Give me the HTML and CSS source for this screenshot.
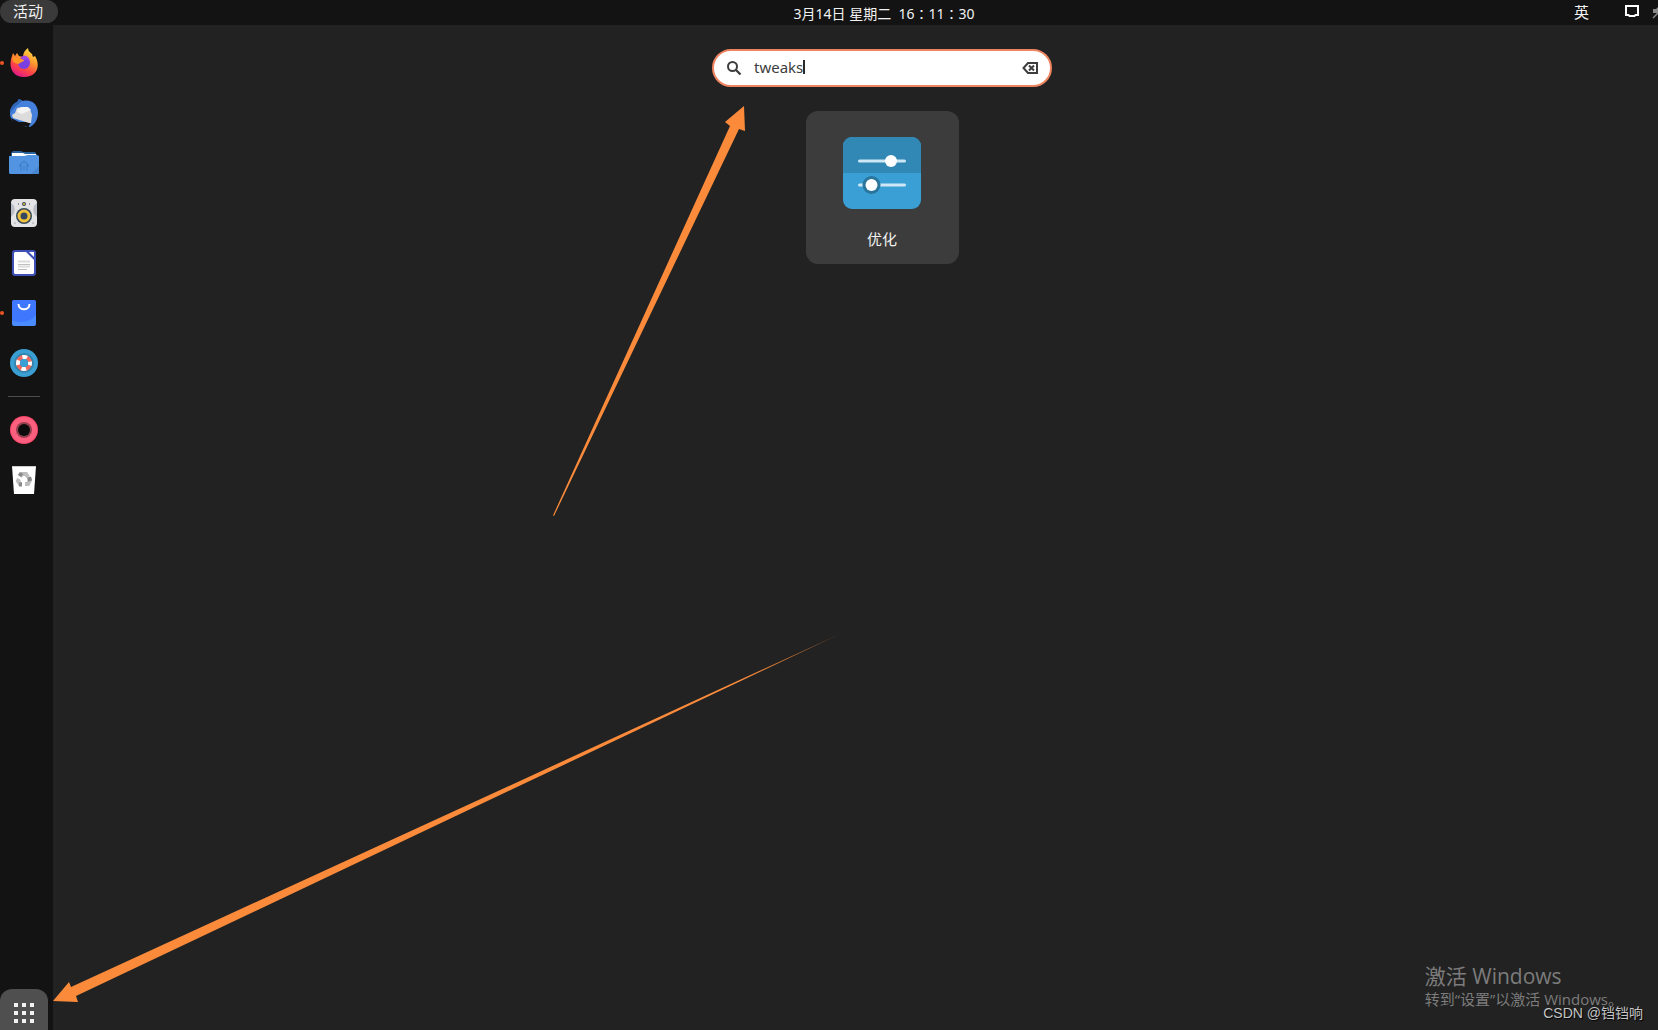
FILE: index.html
```html
<!DOCTYPE html>
<html lang="zh-CN">
<head>
    <meta charset="UTF-8">
    <meta name="viewport" content="width=device-width, initial-scale=1.0">
    <title>活动</title>
    <link rel="stylesheet" href="styles.css">
</head>
<body>
    <header class="topbar">
        <button class="activities">活动</button>
        <time class="clock">3月14日 星期二&nbsp; 16∶11∶30</time>
        <div class="tray">
            <button class="tray-btn">英</button>
            <button class="tray-btn" aria-label="Display">
                <svg width="16" height="16" viewBox="0 0 16 16">
                    <path d="M2 2h12v9h-2.500l-1 1h-5l-1-1H2z" fill="none" stroke="#fff" stroke-width="2"/>
                </svg>
            </button>
            <button class="tray-btn tray-last" aria-label="Volume">
                <svg width="16" height="16" viewBox="0 0 16 16">
                    <path d="M1 5h3l3-3v9L4 9H1z" fill="#888"/>
                    <path d="M1 14L9 6" stroke="#888" stroke-width="1.500"/>
                </svg>
            </button>
        </div>
    </header>

    <div class="desktop">
        <nav class="dock">
            <button class="dock-item running" aria-label="Firefox">
                <svg width="30" height="30" viewBox="0 0 30 30">
                    <defs>
                        <linearGradient id="fox" x1="0.8" y1="0" x2="0.3" y2="1">
                            <stop offset="0" stop-color="#ffe14a"/>
                            <stop offset="0.4" stop-color="#ff9a2e"/>
                            <stop offset="0.7" stop-color="#ff4646"/>
                            <stop offset="1" stop-color="#e0188a"/>
                        </linearGradient>
                    </defs>
                    <path d="M3 8l1-3 2 3 2-3 2 3 4 1c0-4 2-7 5-9 0 3 2 4 4 6l1 3 2-1c6 10 2 21-11 21C3 29-1 18 3 8z" fill="url(#fox)"/>
                    <circle cx="15" cy="15" r="6" fill="#7a3fe0"/>
                    <path d="M12 9c4-3 9 0 9 5-2-3-5-3-7-2z" fill="#a446e8"/>
                    <path d="M3 9l7 1 5 2c0 2-4 2-5 4-3-1-5-1-6-3z" fill="#ff9624"/>
                </svg>
            </button>
            <button class="dock-item" aria-label="Thunderbird">
                <svg width="30" height="30" viewBox="0 0 30 30">
                    <path d="M8 4l2-3 4 2c9-2 15 4 15 12 0 7-4 12-8 14l-9-1C4 26 1 21 1 15 1 10 4 6 8 4z" fill="#4580dc"/>
                    <path d="M8 4l2-3 3 2-7 6-5 6c0-5 3-9 7-11z" fill="#2f66b8"/>
                    <path d="M2 20l8 4 12 0-3 6-2-2-2 1-6-1C5 26 3 23 2 20z" fill="#131313"/>
                    <path d="M3 17l3-2 2-5 5-1h5l3 2 2 6-1 8-2 0L4 20z" fill="#dcdcdc"/>
                    <path d="M8 14l5 2 9-4-3-3h-6l-4 2z" fill="#f4f4f4"/>
                </svg>
            </button>
            <button class="dock-item" aria-label="文件">
                <svg width="30" height="30" viewBox="0 0 30 30">
                    <path d="M2 5l2-2h8l2 1h12l2 3v5H2z" fill="#28619c"/>
                    <path d="M3 5h11l2 1h11v4H3z" fill="#fff"/>
                    <path d="M1 8h14l4-1h9l2 1v17l-1 1H1l-1-1V8z" fill="#5294e2"/>
                    <path d="M30 18v7l-1 1h-7z" fill="#4786ce"/>
                    <path d="M10 18l5-5 5 5M12 17v5h1m4 0h1v-5M15 18v4" fill="none" stroke="#3f7fc6" stroke-width="1.200"/>
                </svg>
            </button>
            <button class="dock-item" aria-label="Rhythmbox">
                <svg width="30" height="30" viewBox="0 0 30 30">
                    <rect x="2" y="1" width="26" height="28" rx="4" fill="#e4e4e6"/>
                    <path d="M2 5c5 3 5 10 0 14zM28 5c-5 3-5 10 0 14z" fill="#b8bcc4"/>
                    <circle cx="15" cy="18" r="8" fill="#34495e"/>
                    <circle cx="15" cy="18" r="5" fill="none" stroke="#efc13c" stroke-width="3"/>
                    <circle cx="15" cy="6" r="2" fill="#34495e"/>
                    <circle cx="15" cy="6" r="1" fill="#efc13c"/>
                    <path d="M9.500 5v2M20.500 5v2" stroke="#8a8e94"/>
                    <circle cx="6" cy="25" r="1" fill="#bbb"/>
                    <circle cx="24" cy="25" r="1" fill="#bbb"/>
                </svg>
            </button>
            <button class="dock-item" aria-label="LibreOffice Writer">
                <svg width="30" height="30" viewBox="0 0 30 30">
                    <rect x="3" y="2" width="24" height="26" rx="3" fill="#3f4fb8"/>
                    <path d="M6 4h11l8 8v13l-1 1H6l-1-1V5z" fill="#fff"/>
                    <path d="M20 4h5v5z" fill="#fff"/>
                    <path d="M9 13.500h12M9 18.500h12" stroke="#dcdcdc" stroke-width="2"/>
                    <path d="M9 16.500h12M9 21.500h9" stroke="#c0c0c0" stroke-width="1"/>
                </svg>
            </button>
            <button class="dock-item running" aria-label="软件">
                <svg width="30" height="30" viewBox="0 0 30 30">
                    <rect x="3" y="2" width="24" height="26" rx="2" fill="#4a8cff"/>
                    <path d="M3 4l2-2h20l2 2v13c-5 7-16 9-24 5z" fill="#3f78ff"/>
                    <path d="M9.500 6c0 7 11 7 11 0" fill="none" stroke="#fff" stroke-width="2"/>
                </svg>
            </button>
            <button class="dock-item" aria-label="帮助">
                <svg width="30" height="30" viewBox="0 0 30 30">
                    <circle cx="15" cy="15" r="14" fill="#3a9fd2"/>
                    <circle cx="15" cy="15" r="10" fill="#3484ae"/>
                    <circle cx="15" cy="15" r="6" fill="none" stroke="#f2695c" stroke-width="4"/>
                    <circle cx="15" cy="15" r="6" fill="none" stroke="#fff" stroke-width="4" stroke-dasharray="4.710 4.710" stroke-dashoffset="2.360"/>
                    <circle cx="15" cy="15" r="4" fill="#3a9fd2"/>
                </svg>
            </button>
            <hr class="dock-sep">
            <button class="dock-item" aria-label="光盘">
                <svg width="30" height="30" viewBox="0 0 30 30">
                    <circle cx="15" cy="15" r="14" fill="#fc4468"/>
                    <circle cx="15" cy="15" r="13" fill="#fd607f"/>
                    <circle cx="15" cy="15" r="8" fill="#93404f"/>
                    <circle cx="15" cy="15" r="6" fill="#0c0c0c"/>
                </svg>
            </button>
            <button class="dock-item" aria-label="回收站">
                <svg width="30" height="30" viewBox="0 0 30 30">
                    <path d="M3 1h24l-2 28H5z" fill="#fff"/>
                    <path d="M3 1.500h24" stroke="#ccc"/>
                    <g fill="none" stroke-width="4">
                        <path d="M11 11.500l2-2.500h4l2 3" stroke="#bdbdbd"/>
                        <path d="M20.500 13l.5 2-2 4h-3" stroke="#bdbdbd"/>
                        <path d="M13 19h-2l-2-3 1-2" stroke="#bdbdbd"/>
                        <path d="M10.500 11l2-3M20 12l1 4M13 19.500h-3" stroke="#8a8a8a"/>
                    </g>
                </svg>
            </button>
            <button class="apps-btn" aria-label="显示应用程序">
                <svg width="20" height="20" viewBox="0 0 20 20" fill="#f2f2f2">
                    <path d="M0 0h4v4H0zM8 0h4v4H8zM16 0h4v4h-4zM0 8h4v4H0zM8 8h4v4H8zM16 8h4v4h-4zM0 16h4v4H0zM8 16h4v4H8zM16 16h4v4h-4z"/>
                </svg>
            </button>
        </nav>

        <main class="overview">
            <div class="search">
                <svg width="16" height="16" viewBox="0 0 16 16" fill="none" stroke="#3d3d3d">
                    <circle cx="6.500" cy="6.500" r="4.500" stroke-width="2"/>
                    <path d="M10 10l4.500 4.500" stroke-width="2.300"/>
                </svg>
                <div class="search-field">
                    <input class="search-input" type="text" value="tweaks" aria-label="搜索">
                    <span class="caret"></span>
                </div>
                <button class="clear-btn" aria-label="清除">
                    <svg width="16" height="14" viewBox="0 0 16 14" fill="none" stroke="#3d3d3d">
                        <path d="M6 2h9v10H6L1.500 7z" stroke-width="2"/>
                        <path d="M7 4.500l5 5M12 4.500l-5 5" stroke-width="2"/>
                    </svg>
                </button>
            </div>

            <button class="app-card">
                <svg width="78" height="72" viewBox="0 0 78 72">
                    <rect width="78" height="72" rx="9" fill="#3a9fd5"/>
                    <path d="M0 36V9a9 9 0 0 1 9-9h60a9 9 0 0 1 9 9v27z" fill="#3188b5"/>
                    <path d="M16.500 24h45M16.500 48h45" stroke="#cde8f4" stroke-width="3" stroke-linecap="round"/>
                    <circle cx="28.500" cy="48" r="9" fill="#2a759c"/>
                    <circle cx="28.500" cy="48" r="6" fill="#fff"/>
                    <circle cx="48" cy="24" r="6" fill="#fff"/>
                </svg>
                <span>优化</span>
            </button>
        </main>
    </div>

    <!-- arrows drawn over the desktop -->
    <svg class="arrows" width="1658" height="1030" viewBox="0 0 1658 1030">
        <defs>
            <linearGradient id="fade" gradientUnits="userSpaceOnUse" x1="740" y1="680" x2="840" y2="634">
                <stop offset="0" stop-color="#fb8b3a"/>
                <stop offset="1" stop-color="#fb8b3a" stop-opacity="0.500"/>
            </linearGradient>
        </defs>
        <path d="M744 106l1 25-6-2L554 516l-1-.5L730 126l-5-4z" fill="#fb8b3a"/>
        <path d="M53 1001l16-19 2 5L841 633.500 76 996l2 6z" fill="url(#fade)"/>
    </svg>

    <aside class="activate">
        <p class="activate-title">激活 Windows</p>
        <p class="activate-text">转到“设置”以激活 Windows。</p>
    </aside>
    <p class="credit">CSDN @铛铛响</p>
</body>
</html>
```
FILE: styles.css
```css
* {
    box-sizing: border-box;
}

body {
    margin: 0;
    height: 100vh;
    display: flex;
    flex-direction: column;
    overflow: hidden;
    position: relative;
    background-color: #222;
    color: #f2f2f2;
    font-family: "Noto Sans", "Noto Sans CJK SC", sans-serif;
    font-size: 14px;
}

button {
    border: none;
    padding: 0;
    background: none;
    color: inherit;
    font: inherit;
    cursor: pointer;
}

p {
    margin: 0;
}

svg {
    display: block;
    flex: none;
}

.topbar {
    flex: none;
    height: 25px;
    display: grid;
    grid-template-columns: 1fr auto 1fr;
    background-color: #131313;
}

.activities {
    justify-self: start;
    width: 58px;
    height: 23px;
    padding-right: 2px;
    border-radius: 12px;
    background-color: #3a3a3a;
    font-size: 15px;
    line-height: 23px;
}

.clock {
    padding-left: 110px;
    line-height: 27px;
    white-space: nowrap;
}

.tray {
    display: flex;
    justify-content: flex-end;
    align-items: flex-start;
    gap: 35px;
    overflow: hidden;
}

.tray-btn {
    padding-top: 2px;
    font-size: 15px;
    line-height: 20px;
}

.tray-btn svg {
    margin-top: 2px;
}

.tray-last {
    width: 6px;
    margin-left: -23px;
    overflow: hidden;
}

.desktop {
    flex: 1;
    min-height: 0;
    display: flex;
}

.dock {
    flex: none;
    width: 53px;
    display: flex;
    flex-direction: column;
    padding-top: 13px;
    background-color: #131313;
}

.dock-item {
    flex: none;
    position: relative;
    width: 48px;
    height: 50px;
    display: flex;
    align-items: center;
    justify-content: center;
}

.running::before {
    content: "";
    position: absolute;
    left: 0;
    top: 23px;
    width: 4px;
    height: 4px;
    border-radius: 50%;
    background-color: #e95420;
}

.dock-sep {
    width: 32px;
    height: 1px;
    margin: 8px;
    border: none;
    background-color: #4d4d4d;
}

.apps-btn {
    flex: none;
    width: 48px;
    height: 41px;
    margin-top: auto;
    padding-top: 6px;
    display: flex;
    align-items: center;
    justify-content: center;
    border-radius: 12px 12px 0 0;
    background-color: #4f4f4f;
}

.overview {
    flex: 1;
    display: flex;
    flex-direction: column;
    align-items: center;
    gap: 24px;
    padding: 24px 0 24px 53px;
}

.search {
    width: 340px;
    height: 38px;
    display: flex;
    align-items: center;
    gap: 12px;
    padding: 0 12px;
    border: 2px solid #ee8460;
    border-radius: 19px;
    background-color: #fff;
}

.search-field {
    flex: 1;
    min-width: 0;
    display: flex;
    align-items: center;
    padding-bottom: 2px;
}

.search-input {
    field-sizing: content;
    padding: 0;
    border: none;
    outline: none;
    background: none;
    color: #3d3d3d;
    font: inherit;
    font-size: 15px;
}

.caret {
    width: 2px;
    height: 14px;
    background-color: #2a2a2a;
}

.app-card {
    width: 153px;
    height: 153px;
    display: flex;
    flex-direction: column;
    align-items: center;
    gap: 20px;
    padding-top: 26px;
    border-radius: 12px;
    background-color: #3c3c3c;
    font-size: 15px;
    line-height: 20px;
}

.arrows {
    position: absolute;
    left: 0;
    top: 0;
    pointer-events: none;
}

.activate {
    position: absolute;
    right: 35px;
    bottom: 21px;
    color: #7c7c7c;
    font-family: "Open Sans", "Noto Sans CJK SC", sans-serif;
}

.activate-title {
    font-size: 21px;
    line-height: 26px;
}

.activate-text {
    font-size: 15px;
    line-height: 20px;
}

.credit {
    position: absolute;
    right: 15px;
    bottom: 7px;
    color: #c4c4c4;
    font-family: "Liberation Sans", "Noto Sans CJK SC", sans-serif;
    line-height: 20px;
    text-shadow: 1px 1px 1px #000;
}
```
